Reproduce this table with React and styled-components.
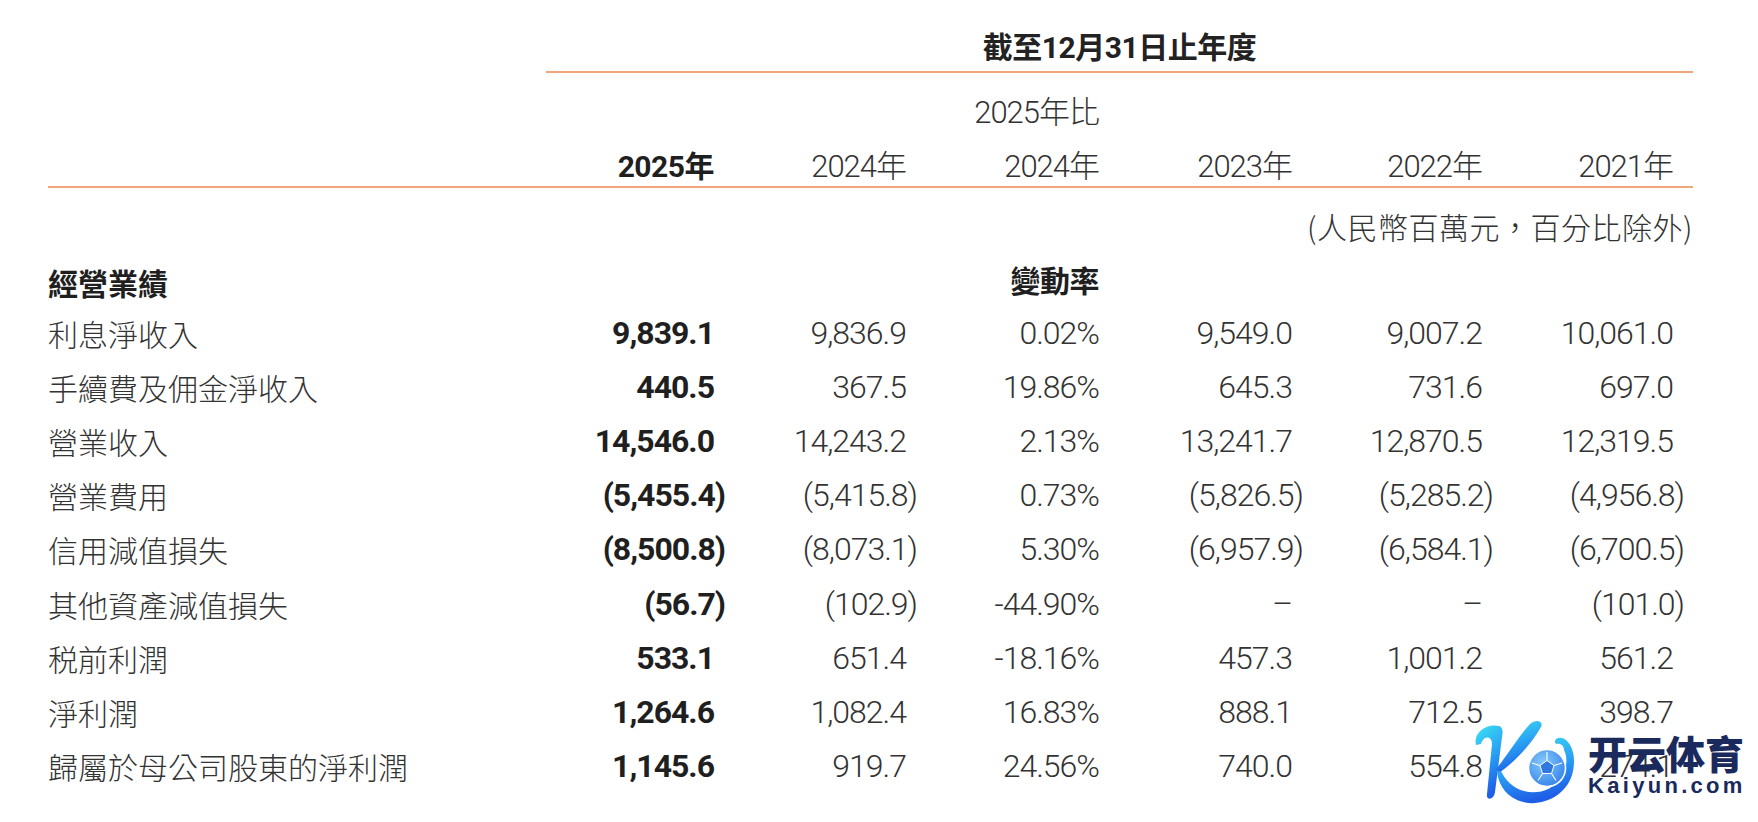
import styled, { createGlobalStyle } from "styled-components";

const GlobalStyle = createGlobalStyle`
    body {
        margin: 0;
        background: #ffffff;
    }
`

const years = ['2025年', '2024年', '2024年', '2023年', '2022年', '2021年']

const rows = [
    ['利息淨收入', '9,839.1', '9,836.9', '0.02%', '9,549.0', '9,007.2', '10,061.0'],
    ['手續費及佣金淨收入', '440.5', '367.5', '19.86%', '645.3', '731.6', '697.0'],
    ['營業收入', '14,546.0', '14,243.2', '2.13%', '13,241.7', '12,870.5', '12,319.5'],
    ['營業費用', '(5,455.4)', '(5,415.8)', '0.73%', '(5,826.5)', '(5,285.2)', '(4,956.8)'],
    ['信用減值損失', '(8,500.8)', '(8,073.1)', '5.30%', '(6,957.9)', '(6,584.1)', '(6,700.5)'],
    ['其他資產減值損失', '(56.7)', '(102.9)', '-44.90%', '–', '–', '(101.0)'],
    ['税前利潤', '533.1', '651.4', '-18.16%', '457.3', '1,001.2', '561.2'],
    ['淨利潤', '1,264.6', '1,082.4', '16.83%', '888.1', '712.5', '398.7'],
    ['歸屬於母公司股東的淨利潤', '1,145.6', '919.7', '24.56%', '740.0', '554.8', '274.1'],
]

const Logo = () => (
    <LogoWrap>
        <svg width="130" height="95" viewBox="0 0 130 95">
            <defs>
                <linearGradient id="kgrad" x1="0" y1="0" x2="0.3" y2="1">
                    <stop offset="0" stopColor="#3ee3f2" />
                    <stop offset="0.5" stopColor="#2aa6f4" />
                    <stop offset="1" stopColor="#1f5fe6" />
                </linearGradient>
                <radialGradient id="ball" cx="0.4" cy="0.35" r="0.7">
                    <stop offset="0" stopColor="#86cafb" />
                    <stop offset="1" stopColor="#3383ea" />
                </radialGradient>
            </defs>
            {/* stem with top-left curl */}
            <path fill="url(#kgrad)" d="M16 30 C13 18 26 8 39 11 C43 12 43 17 42 22 L35 77 C34 85 26 86 27 79 L32 29 C32 21 24 20 21 29 Z" />
            {/* upper arm */}
            <path fill="url(#kgrad)" d="M36 54 C48 40 58 22 70 9 C75 4 84 5 81 12 C72 28 56 46 39 58 Z" />
            {/* lower leg sweeping round the ball */}
            <path fill="url(#kgrad)" d="M37 57 C39 72 48 83 63 87 C83 92 106 80 112 60 C116 46 114 32 106 25 C100 20 92 24 96 29 C101 28 104 31 104 35 C108 43 107 54 101 63 C93 75 77 80 64 76 C53 73 45 65 41 56 Z" />
            <circle cx="87" cy="53" r="18.5" fill="url(#ball)" stroke="#ffffff" strokeWidth="1.6" />
            <polygon points="87,45.5 94,50.5 91.5,58.5 82.5,58.5 80,50.5" fill="#2f78e0" stroke="#ffffff" strokeWidth="1" />
            <g stroke="#ffffff" strokeWidth="1.1" fill="none">
                <path d="M87 45.5 L87 37" />
                <path d="M94 50.5 L102 48" />
                <path d="M91.5 58.5 L96 65.5" />
                <path d="M82.5 58.5 L78 65.5" />
                <path d="M80 50.5 L72 48" />
            </g>
        </svg>
        <LogoText>
            <LogoName>开云体育</LogoName>
            <LogoDomain>Kaiyun.com</LogoDomain>
        </LogoText>
    </LogoWrap>
)

const Cell = ({ value, bold }) => (
    <NumCell $bold={bold}>
        <Value $hang={value.endsWith(')')}>{value}</Value>
    </NumCell>
)

const App = () => {
    return (
        <Page>
            <GlobalStyle />
            <Sheet>
                <TitleBar>截至12月31日止年度</TitleBar>
                <Grid $height="78px">
                    <span />
                    <span />
                    <span />
                    <HeadCell>2025年比</HeadCell>
                </Grid>
                <YearGrid>
                    <span />
                    {years.map((y, i) => (
                        <HeadCell key={i} $bold={i === 0}>{y}</HeadCell>
                    ))}
                </YearGrid>
                <Unit>(人民幣百萬元，百分比除外)</Unit>
                <Grid $height="46px" $pad="0 0 3px">
                    <Label $bold>經營業績</Label>
                    <span />
                    <span />
                    <HeadCell $bold>變動率</HeadCell>
                </Grid>
                {rows.map((r) => (
                    <Grid key={r[0]} $height="54.1px">
                        <Label>{r[0]}</Label>
                        {r.slice(1).map((v, i) => (
                            <Cell key={i} value={v} bold={i === 0} />
                        ))}
                    </Grid>
                ))}
            </Sheet>
            <Logo />
        </Page>
    )
}

export default App;

const Page = styled.div`
    position: relative;
    width: 1758px;
    height: 822px;
    overflow: hidden;
    background: #ffffff;
    color: #333333;
    font-family: Roboto, "Noto Sans CJK TC", "Noto Sans CJK SC", sans-serif;
`
const Sheet = styled.div`
    width: 1645px;
    margin-left: 48px;
`
const TitleBar = styled.div`
    margin-left: 498px;
    height: 47px;
    padding-top: 24px;
    display: flex;
    align-items: center;
    justify-content: center;
    border-bottom: 2px solid #f3a57a;
    font-size: 30px;
    font-weight: 700;
    color: #222222;
    line-height: 1;
    letter-spacing: -0.5px;
`
const Grid = styled.div`
    display: grid;
    grid-template-columns: 474px 192px 192px 193px 193px 190px 191px;
    align-items: center;
    height: ${p => p.$height};
    padding: ${p => p.$pad || '0'};
    box-sizing: border-box;
`
const YearGrid = styled(Grid)`
    height: 37px;
    padding-bottom: 9px;
    border-bottom: 2px solid #f3a57a;
`
const HeadCell = styled.div`
    text-align: right;
    font-size: ${p => p.$bold ? '30px' : '31px'};
    line-height: 1;
    letter-spacing: ${p => p.$bold ? '-0.5px' : '-1px'};
    font-weight: ${p => p.$bold ? 700 : 300};
    color: ${p => p.$bold ? '#1f1f1f' : '#333333'};
`
const Unit = styled.div`
    height: 72px;
    padding-top: 4px;
    box-sizing: border-box;
    display: flex;
    align-items: center;
    justify-content: flex-end;
    font-family: "Noto Sans CJK TC", sans-serif;
    font-size: 30px;
    font-weight: 300;
    color: #333333;
    letter-spacing: 0.5px;
`
const Label = styled.div`
    font-family: "Noto Sans CJK TC", sans-serif;
    font-size: 30px;
    line-height: 1;
    font-weight: ${p => p.$bold ? 700 : 300};
    color: ${p => p.$bold ? '#1f1f1f' : '#333333'};
`
const NumCell = styled.div`
    display: flex;
    justify-content: flex-end;
    font-size: 32px;
    line-height: 1;
    letter-spacing: -1px;
    font-weight: ${p => p.$bold ? 700 : 300};
    color: ${p => p.$bold ? '#1f1f1f' : '#333333'};
`
const Value = styled.span`
    margin-right: ${p => p.$hang ? '-11px' : '0'};
`
const LogoWrap = styled.div`
    position: absolute;
    left: 1460px;
    top: 715px;
    display: flex;
    align-items: flex-start;
`
const LogoText = styled.div`
    display: flex;
    flex-direction: column;
    margin-left: -2px;
    margin-top: 17px;
`
const LogoName = styled.div`
    font-family: "Noto Sans CJK SC", sans-serif;
    font-weight: 900;
    font-size: 39px;
    line-height: 40px;
    color: #1b2a5c;
`
const LogoDomain = styled.div`
    font-family: "Liberation Sans", sans-serif;
    font-weight: 700;
    font-size: 22px;
    line-height: 24px;
    letter-spacing: 3.3px;
    color: #1b2a5c;
    margin-top: 2px;
`
